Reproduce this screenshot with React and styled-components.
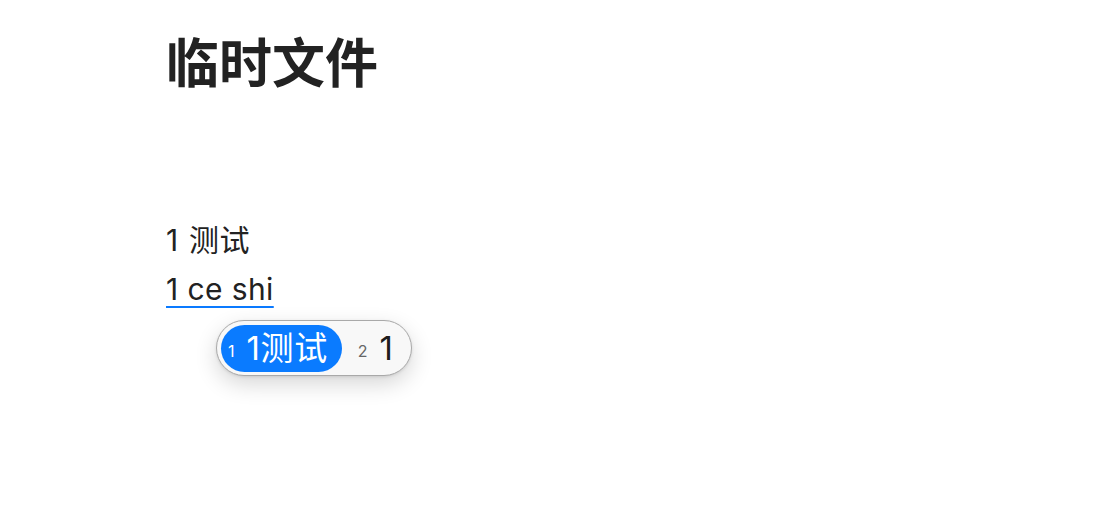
import React from "react"
import styled, { createGlobalStyle } from "styled-components"

const GlobalStyle = createGlobalStyle`
  html, body {
    margin: 0;
    padding: 0;
    background: #fff;
  }
  body {
    font-family: Inter, "Noto Sans CJK SC", sans-serif;
    color: #222;
  }
`

const Page = styled.div`
  position: relative;
  width: 1094px;
  height: 516px;
  padding: 0 0 0 166px;
  box-sizing: border-box;
`

const Title = styled.h1`
  margin: 0;
  padding-top: 25px;
  font-size: 53px;
  line-height: 70px;
  font-weight: 700;
  color: #222;
  font-family: "Noto Sans CJK SC", sans-serif;
`

const Body = styled.div`
  margin-top: 121px;
  display: flex;
  flex-direction: column;
`

const Line = styled.div`
  font-size: 30px;
  line-height: 49px;
  letter-spacing: 0.4px;
  color: #222;
  width: fit-content;
`

const Gap = styled.span`
  letter-spacing: 2px;
`

const Marked = styled.span`
  text-decoration: underline;
  text-decoration-color: #0a7aff;
  text-decoration-thickness: 2px;
  text-underline-offset: 6px;
`

const Candidates = styled.div`
  position: absolute;
  left: 216px;
  top: 320px;
  height: 56px;
  box-sizing: border-box;
  display: flex;
  align-items: center;
  gap: 16px;
  padding: 0 17px 0 4px;
  background: #f8f8f8;
  border: 1px solid #a9a9a9;
  border-radius: 28px;
  box-shadow: 0 8px 22px rgba(0, 0, 0, 0.16), 0 1px 3px rgba(0, 0, 0, 0.1);
`

const Candidate = styled.div`
  display: flex;
  align-items: center;
  gap: 12px;
  height: 47px;
  padding: ${(p) => (p.$active ? "0 14px 0 7px" : "0")};
  border-radius: 24px;
  background: ${(p) => (p.$active ? "#0a7bff" : "transparent")};
  color: ${(p) => (p.$active ? "#fff" : "#1d1d1d")};
`

const Index = styled.span`
  font-size: 16px;
  line-height: 1;
  margin-top: 5px;
  color: ${(p) => (p.$active ? "#fff" : "#666")};
`

const Word = styled.span`
  font-size: 33px;
  line-height: 1;
  letter-spacing: 0.6px;
  font-family: Inter, "Noto Sans CJK SC", sans-serif;
`

const candidates = [
  { n: 1, text: "1测试" },
  { n: 2, text: "1" },
]

export default function App() {
  return (
    <>
      <GlobalStyle />
      <Page>
        <Title>临时文件</Title>
        <Body>
          <Line>
            1<Gap> </Gap>测试
          </Line>
          <Line>
            <Marked>1 ce shi</Marked>
          </Line>
        </Body>
        <Candidates>
          {candidates.map((c, i) => (
            <Candidate key={c.n} $active={i === 0}>
              <Index $active={i === 0}>{c.n}</Index>
              <Word>{c.text}</Word>
            </Candidate>
          ))}
        </Candidates>
      </Page>
    </>
  )
}
